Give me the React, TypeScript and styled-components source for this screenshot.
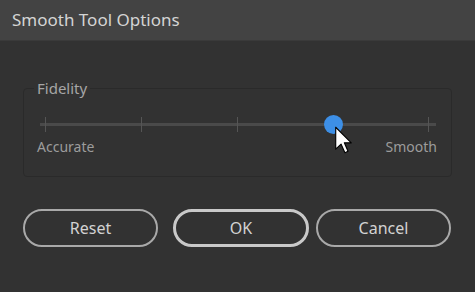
import { createGlobalStyle, styled } from "styled-components";

const GlobalStyle = createGlobalStyle`
  html, body {
    margin: 0;
    padding: 0;
    background: #323232;
  }
  body {
    font-family: "Noto Sans", "Open Sans", sans-serif;
  }
`;

const Dialog = styled.div`
  width: 475px;
  height: 292px;
  background: #323232;
  display: flex;
  flex-direction: column;
  overflow: hidden;
`;

const TitleBar = styled.div`
  height: 41px;
  background: #434343;
  border-bottom: 1px solid #3a3a3a;
  display: flex;
  align-items: center;
  padding-left: 12px;
  padding-bottom: 1px;
  box-sizing: border-box;
  color: #d4d4d4;
  font-size: 17px;
`;

const Body = styled.div`
  padding: 0 23px;
  display: flex;
  flex-direction: column;
`;

const Group = styled.fieldset`
  margin: 38px 0 0;
  padding: 0 14px 0 10px;
  height: 98px;
  box-sizing: border-box;
  border: 1px solid #2a2a2a;
  border-radius: 4px;
  min-width: 0;
`;

const Legend = styled.legend`
  padding: 0 3px;
  color: #a6a6a6;
  font-size: 15px;
  line-height: 18px;
`;

const SliderArea = styled.div`
  position: relative;
  height: 28px;
  margin: 14px 0 0 3px;
`;

const Track = styled.div`
  position: absolute;
  left: 3px;
  right: 1px;
  top: 12px;
  height: 3px;
  background: #4a4a4a;
`;

const Ticks = styled.div`
  position: absolute;
  left: 8px;
  right: 8px;
  top: 6px;
  height: 15px;
  display: flex;
  justify-content: space-between;
`;

const Tick = styled.span`
  width: 1px;
  height: 15px;
  background: #555555;
`;

const Thumb = styled.div`
  position: absolute;
  top: 4px;
  width: 19px;
  height: 19px;
  margin-left: -9.5px;
  border-radius: 50%;
  background: #3d8fe6;
`;

const Cursor = styled.svg`
  position: absolute;
  top: 15px;
  margin-left: 1.5px;
`;

const Labels = styled.div`
  display: flex;
  justify-content: space-between;
  margin: -1px 0 0 3px;
  color: #9c9c9c;
  font-size: 14px;
  line-height: 18px;
`;

const ButtonRow = styled.div`
  display: flex;
  margin-top: 32px;
`;

const Button = styled.button<{ $primary?: boolean; $offset?: number }>`
  width: ${(p) => (p.$primary ? 136 : 135)}px;
  height: 38px;
  margin-left: ${(p) => p.$offset ?? 0}px;
  border-radius: 19px;
  background: transparent;
  border: ${(p) => (p.$primary ? "3px solid #c9c9c9" : "2px solid #a9a9a9")};
  color: #d2d2d2;
  font-family: "Noto Sans", "Open Sans", sans-serif;
  font-size: 16px;
  padding: 0;
  cursor: pointer;
`;

const position = 75;

export default function App() {
  return (
    <>
      <GlobalStyle />
      <Dialog>
        <TitleBar>Smooth Tool Options</TitleBar>
        <Body>
          <Group>
            <Legend>Fidelity</Legend>
            <SliderArea>
              <Track />
              <Ticks>
                {[0, 1, 2, 3, 4].map((i) => (
                  <Tick key={i} />
                ))}
              </Ticks>
              <Thumb style={{ left: `calc(8px + (100% - 16px) * ${position / 100})` }} />
              <Cursor
                width="17"
                height="28"
                viewBox="0 0 12 19"
                style={{ left: `calc(8px + (100% - 16px) * ${position / 100})` }}
              >
                <path
                  d="M0.5 0.5 L0.5 16 L4.3 12.4 L7 18.5 L9.2 17.5 L6.6 11.5 L11.5 11.5 Z"
                  fill="#ffffff"
                  stroke="#000000"
                  strokeWidth="0.8"
                  strokeLinejoin="round"
                />
              </Cursor>
            </SliderArea>
            <Labels>
              <span>Accurate</span>
              <span>Smooth</span>
            </Labels>
          </Group>
          <ButtonRow>
            <Button>Reset</Button>
            <Button $primary $offset={15}>
              OK
            </Button>
            <Button $offset={7}>Cancel</Button>
          </ButtonRow>
        </Body>
      </Dialog>
    </>
  );
}
